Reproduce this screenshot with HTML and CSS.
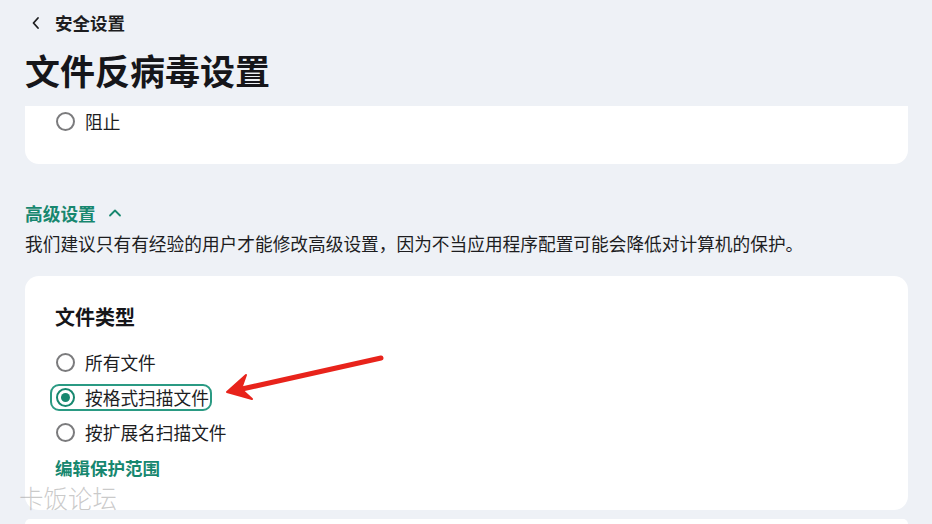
FILE: index.html
```html
<!DOCTYPE html>
<html lang="zh-CN">
<head>
<meta charset="utf-8">
<title>文件反病毒设置</title>
<link rel="stylesheet" href="styles.css">
</head>
<body>
<div class="page">
  <div class="crumb">
    <svg class="chev" width="10" height="14" viewBox="0 0 10 14"><path d="M7 2 L2.5 7 L7 12" fill="none" stroke="#1d1d1f" stroke-width="1.8" stroke-linecap="round" stroke-linejoin="round"/></svg>
    <span>安全设置</span>
  </div>
  <h1 class="title">文件反病毒设置</h1>

  <div class="card card-top">
    <label class="opt"><span class="radio"></span><span>阻止</span></label>
  </div>

  <div class="adv">
    <span>高级设置</span>
    <svg width="14" height="10" viewBox="0 0 14 10"><path d="M2 7.5 L7 2.5 L12 7.5" fill="none" stroke="#17876f" stroke-width="1.8" stroke-linecap="round" stroke-linejoin="round"/></svg>
  </div>
  <p class="desc">我们建议只有有经验的用户才能修改高级设置，因为不当应用程序配置可能会降低对计算机的保护。</p>

  <div class="card card-main">
    <h2 class="card-title">文件类型</h2>
    <div class="row"><label class="opt"><span class="radio"></span><span>所有文件</span></label></div>
    <div class="row"><label class="opt focus"><span class="radio on"></span><span>按格式扫描文件</span></label></div>
    <div class="row"><label class="opt"><span class="radio"></span><span>按扩展名扫描文件</span></label></div>
    <a class="link">编辑保护范围</a>
  </div>

  <div class="card card-next"></div>
</div>

<div class="watermark">卡饭论坛</div>

<svg class="arrow" width="932" height="524" viewBox="0 0 932 524">
  <line x1="381" y1="358" x2="242" y2="389" stroke="#e8231b" stroke-width="5" stroke-linecap="round"/>
  <path d="M227 392 L246 375 L241 389 L252 399 Z" fill="#e8231b" stroke="#e8231b" stroke-width="2" stroke-linejoin="round"/>
</svg>
</body>
</html>
```
FILE: styles.css
```css
* { box-sizing: border-box; }
html, body { margin: 0; padding: 0; }
body {
  background: #eef1f6;
  font-family: "Noto Sans CJK SC", "Microsoft YaHei", sans-serif;
  color: #1d1d1f;
  width: 932px;
  height: 524px;
  overflow: hidden;
  position: relative;
}
.page {
  padding: 11px 24px 0 25px;
}
.crumb {
  display: flex;
  align-items: center;
  height: 24px;
  font-size: 17.5px;
  font-weight: 700;
  line-height: 24px;
}
.chev { margin-left: 6px; margin-right: 14px; }
.title {
  margin: 13px 0 0;
  font-size: 35px;
  line-height: 44px;
  font-weight: 700;
  color: #16161a;
}
.card {
  background: #fff;
  border-radius: 14px;
}
.card-top {
  margin-top: 14px;
  height: 58px;
  padding: 2px 25px 0;
  border-radius: 0 0 14px 14px;
}
.opt {
  display: inline-flex;
  align-items: center;
  gap: 10px;
  height: 27px;
  padding: 0 1px 0 4px;
  border: 2px solid transparent;
  border-radius: 9px;
  font-size: 17.7px;
  line-height: 23px;
  color: #1d1d1f;
}
.opt.focus { border-color: #2a9a83; }
.radio {
  width: 19px;
  height: 19px;
  border-radius: 50%;
  border: 2px solid #7b7b7d;
  background: #fff;
  display: flex;
  align-items: center;
  justify-content: center;
  flex: none;
}
.radio.on { border-color: #17876f; }
.radio.on::after {
  content: "";
  width: 9px;
  height: 9px;
  border-radius: 50%;
  background: #17876f;
}
.adv {
  margin-top: 36px;
  display: flex;
  align-items: center;
  gap: 12px;
  height: 26px;
  font-size: 17.7px;
  font-weight: 700;
  color: #17876f;
  line-height: 26px;
}
.desc {
  margin: 4px 0 0;
  font-size: 17.7px;
  line-height: 26px;
  color: #1d1d1f;
  white-space: nowrap;
}
.card-main {
  margin-top: 20px;
  height: 234px;
  padding: 27px 25px 0;
}
.card-title {
  margin: 0 0 13.5px 5px;
  font-size: 20px;
  line-height: 28px;
  font-weight: 700;
  color: #16161a;
}
.row {
  height: 35px;
  display: flex;
  align-items: center;
}
.link {
  display: block;
  margin: 5.5px 0 0 5px;
  font-size: 17.5px;
  line-height: 26px;
  font-weight: 700;
  color: #17876f;
}
.card-next {
  margin-top: 9px;
  height: 5px;
  border-radius: 14px 14px 0 0;
}
.watermark {
  position: absolute;
  left: 19px;
  top: 482px;
  font-size: 24.5px;
  line-height: 32px;
  font-weight: 300;
  color: rgba(150, 150, 150, 0.5);
}
.arrow {
  position: absolute;
  left: 0;
  top: 0;
  pointer-events: none;
}
```
